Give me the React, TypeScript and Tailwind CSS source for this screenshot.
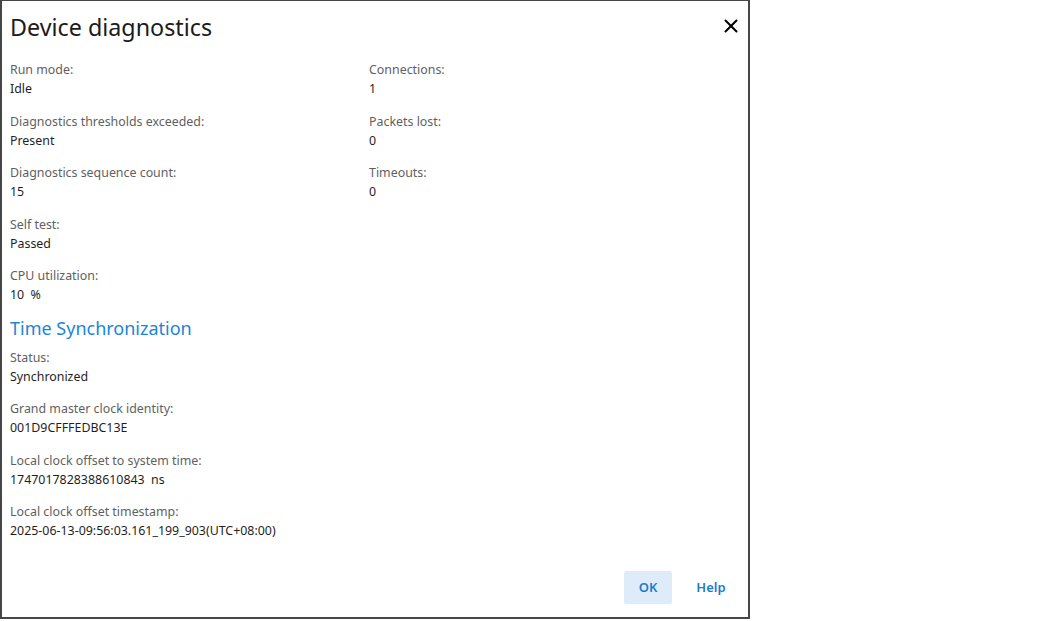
import { X } from "lucide-react";

type Field = { label: string; value: string };

const leftFields: Field[] = [
  { label: "Run mode:", value: "Idle" },
  { label: "Diagnostics thresholds exceeded:", value: "Present" },
  { label: "Diagnostics sequence count:", value: "15" },
  { label: "Self test:", value: "Passed" },
  { label: "CPU utilization:", value: "10  %" },
];

const rightFields: Field[] = [
  { label: "Connections:", value: "1" },
  { label: "Packets lost:", value: "0" },
  { label: "Timeouts:", value: "0" },
];

const timeFields: Field[] = [
  { label: "Status:", value: "Synchronized" },
  { label: "Grand master clock identity:", value: "001D9CFFFEDBC13E" },
  { label: "Local clock offset to system time:", value: "1747017828388610843  ns" },
  { label: "Local clock offset timestamp:", value: "2025-06-13-09:56:03.161_199_903(UTC+08:00)" },
];

function FieldItem({ label, value }: Field) {
  return (
    <div className="flex flex-col h-[51.5px]">
      <span className="text-[12.4px] leading-[19px] text-[#5f5f5f]">{label}</span>
      <span className="text-[12.4px] leading-[19px] text-[#1f1f1f] whitespace-pre">{value}</span>
    </div>
  );
}

export default function App() {
  return (
    <div className="w-[1050px] h-[621px] bg-white" style={{ fontFamily: '"Noto Sans", "Open Sans", sans-serif' }}>
      <div className="w-[750px] h-[619px] border-t border-l-2 border-r-2 border-b-2 border-[#464646] flex flex-col">
        <div className="flex flex-row items-center h-[54px] pl-[8px] pr-[4px]">
          <h1 className="text-[23.3px] leading-[32px] -mt-[2px] font-normal text-[#1b1b1b]">Device diagnostics</h1>
          <button className="ml-auto w-[26px] h-[26px] -mt-[4px] flex items-center justify-center text-black">
            <X size={22} strokeWidth={2.2} />
          </button>
        </div>
        <div className="flex flex-col pl-[8px] pt-[5px] flex-1">
          <div className="flex flex-row">
            <div className="flex flex-col w-[359px]">
              {leftFields.map((f) => (
                <FieldItem key={f.label} {...f} />
              ))}
            </div>
            <div className="flex flex-col">
              {rightFields.map((f) => (
                <FieldItem key={f.label} {...f} />
              ))}
            </div>
          </div>
          <h2 className="text-[18px] leading-[26px] text-[#1a86d8] -mt-[3px] mb-[7px]">Time Synchronization</h2>
          <div className="flex flex-col">
            {timeFields.map((f) => (
              <FieldItem key={f.label} {...f} />
            ))}
          </div>
        </div>
        <div className="flex flex-row items-center justify-end gap-[2px] pb-[13px]">
          <button className="w-[48px] h-[33px] rounded-[2px] bg-[#deecf9] text-[13px] font-semibold text-[#1a7ccc]">OK</button>
          <button className="w-[74px] h-[33px] text-[13px] font-semibold text-[#1a7ccc]">Help</button>
        </div>
      </div>
    </div>
  );
}
